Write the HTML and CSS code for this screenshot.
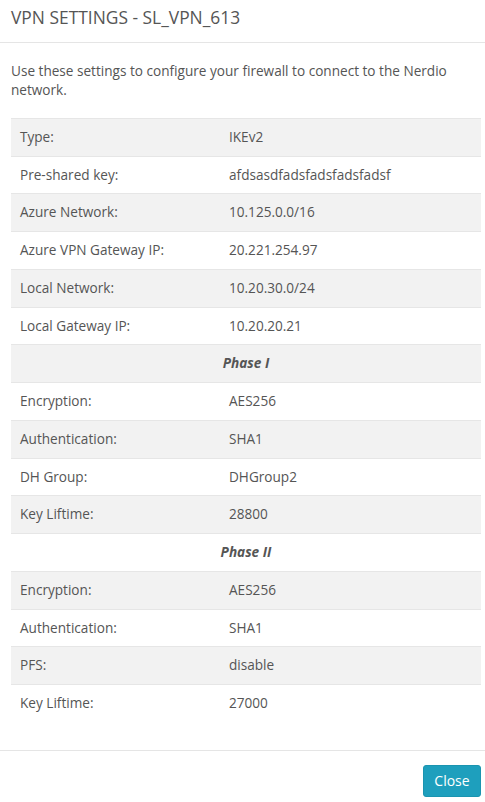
FILE: index.html
```html
<!DOCTYPE html>
<html>
<head>
<meta charset="utf-8">
<link rel="stylesheet" href="styles.css">
</head>
<body>
<div class="modal">
  <div class="modal-header"><h4 class="title">VPN SETTINGS - SL_VPN_613</h4></div>
  <div class="modal-body">
    <p class="intro">Use these settings to configure your firewall to connect to the Nerdio network.</p>
    <table class="settings">
      <colgroup><col class="c1"><col class="c2"></colgroup>
      <tr><td>Type:</td><td>IKEv2</td></tr>
      <tr><td>Pre-shared key:</td><td>afdsasdfadsfadsfadsfadsf</td></tr>
      <tr><td>Azure Network:</td><td>10.125.0.0/16</td></tr>
      <tr><td>Azure VPN Gateway IP:</td><td>20.221.254.97</td></tr>
      <tr><td>Local Network:</td><td>10.20.30.0/24</td></tr>
      <tr><td>Local Gateway IP:</td><td>10.20.20.21</td></tr>
      <tr><td class="phase" colspan="2">Phase I</td></tr>
      <tr><td>Encryption:</td><td>AES256</td></tr>
      <tr><td>Authentication:</td><td>SHA1</td></tr>
      <tr><td>DH Group:</td><td>DHGroup2</td></tr>
      <tr><td>Key Liftime:</td><td>28800</td></tr>
      <tr><td class="phase" colspan="2">Phase II</td></tr>
      <tr><td>Encryption:</td><td>AES256</td></tr>
      <tr><td>Authentication:</td><td>SHA1</td></tr>
      <tr><td>PFS:</td><td>disable</td></tr>
      <tr><td>Key Liftime:</td><td>27000</td></tr>
    </table>
  </div>
  <div class="modal-footer"><button class="btn-close">Close</button></div>
</div>
</body>
</html>
```
FILE: styles.css
```css
html, body { margin: 0; padding: 0; background: #fff; }
body { font-family: "Open Sans", "Noto Sans", sans-serif; color: #555; font-size: 13.6px; }
.modal { width: 485px; }
.modal-header { border-bottom: 1px solid #e5e5e5; padding: 0 11px; height: 42px; display: flex; align-items: center; }
.title { margin: 0; font-size: 17.4px; font-weight: 400; color: #555; line-height: 24px; position: relative; top: -4px; }
.modal-body { padding: 18px 4px 28px 11px; }
.intro { margin: 0 0 19px; line-height: 19px; }
.settings { width: 470px; border-collapse: collapse; table-layout: fixed; }
.settings col.c1 { width: 209px; }
.settings td { border-top: 1px solid #e6e6e6; padding: 8px 9px; line-height: 20.73px; }
.settings tr:nth-child(odd) td { background: #f2f2f2; }
.settings td.phase { text-align: center; font-weight: 700; font-style: italic; color: #555; }
.modal-footer { border-top: 1px solid #e5e5e5; padding: 14px 4px 0 11px; display: flex; justify-content: flex-end; }
.btn-close { background: #1e9fbd; color: #fff; border: 1px solid #1a94b0; border-radius: 3px; font-family: "Open Sans", sans-serif; font-size: 14px; height: 32px; width: 58px; padding: 0; cursor: pointer; }
```
